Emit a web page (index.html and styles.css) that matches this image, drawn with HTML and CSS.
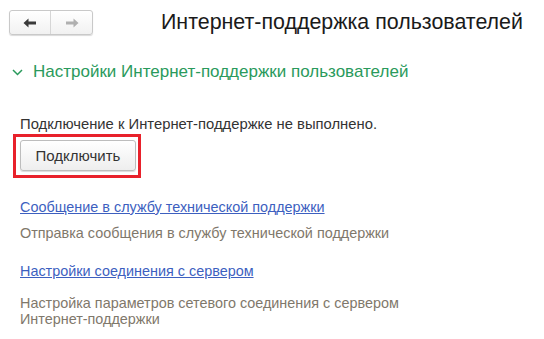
FILE: index.html
```html
<!DOCTYPE html>
<html lang="ru">
<head>
    <meta charset="UTF-8">
    <meta name="viewport" content="width=device-width, initial-scale=1.0">
    <title>Интернет-поддержка пользователей</title>
    <link rel="stylesheet" href="styles.css">
</head>
<body>
    <div class="page">
        <div class="topbar">
            <div class="nav">
                <button class="nav-btn back" title="Назад">
                    <svg width="14" height="10" viewBox="0 0 14 10"><path d="M0.5 5 L5.5 0.5 L5.5 3.5 L13 3.5 L13 6.5 L5.5 6.5 L5.5 9.5 Z" fill="#3a3a3a"/></svg>
                </button>
                <button class="nav-btn forward" title="Вперед">
                    <svg width="14" height="10" viewBox="0 0 14 10"><path d="M13.5 5 L8.5 0.5 L8.5 3.5 L1 3.5 L1 6.5 L8.5 6.5 L8.5 9.5 Z" fill="#b0b0b0"/></svg>
                </button>
            </div>
            <h1 class="title">Интернет-поддержка пользователей</h1>
        </div>

        <div class="group-head">
            <svg class="chevron" width="11" height="7" viewBox="0 0 11 7"><path d="M1 1 L5.5 5.5 L10 1" fill="none" stroke="#2a9a5c" stroke-width="1.5"/></svg>
            <span>Настройки Интернет-поддержки пользователей</span>
        </div>

        <div class="group-body">
            <p class="status">Подключение к Интернет-поддержке не выполнено.</p>
            <div class="highlight">
                <button class="btn">Подключить</button>
            </div>

            <div class="item">
                <a class="link" href="#">Сообщение в службу технической поддержки</a>
                <p class="hint">Отправка сообщения в службу технической поддержки</p>
            </div>

            <div class="item second">
                <a class="link" href="#">Настройки соединения с сервером</a>
                <p class="hint">Настройка параметров сетевого соединения с сервером<br>Интернет-поддержки</p>
            </div>
        </div>
    </div>
</body>
</html>
```

FILE: styles.css
```css
body {
    margin: 0;
    background-color: white;
    font-family: Arial, "Liberation Sans", sans-serif;
    color: #333;
}
.page {
    width: 544px;
    height: 339px;
    overflow: hidden;
}
.topbar {
    display: flex;
    align-items: center;
    padding: 10px 0 0 9px;
}
.nav {
    display: flex;
    height: 25px;
    border: 1px solid #c9c9c9;
    border-radius: 3px;
    box-shadow: 0 1px 1px rgba(0, 0, 0, 0.15);
    background: linear-gradient(#ffffff, #f1f1f1);
    box-sizing: border-box;
}
.nav-btn {
    width: 41px;
    height: 23px;
    border: none;
    background: transparent;
    padding: 0;
    display: flex;
    align-items: center;
    justify-content: center;
}
.nav-btn.back {
    border-right: 1px solid #d6d6d6;
}
.title {
    margin: 0 0 0 68px;
    font-size: 21.4px;
    font-weight: normal;
    color: #1a1a1a;
    line-height: 25px;
}
.group-head {
    display: flex;
    align-items: center;
    margin: 26px 0 0 12px;
    color: #2a9a5c;
    font-size: 17px;
    line-height: 22px;
}
.chevron {
    margin-right: 10px;
}
.group-body {
    padding-left: 20px;
    margin-top: 33px;
}
.status {
    margin: 0;
    font-size: 14.8px;
    line-height: 17px;
}
.highlight {
    display: inline-block;
    margin: 1px 0 0 -7px;
    padding: 3px 2px 4px 4px;
    border: 3px solid #e8212b;
}
.btn {
    display: block;
    width: 116px;
    height: 31px;
    border: 1px solid #bdbdbd;
    border-radius: 3px;
    background: linear-gradient(#ffffff, #eeeeee);
    box-shadow: 0 1px 1px rgba(0, 0, 0, 0.15);
    font-family: Arial, "Liberation Sans", sans-serif;
    font-size: 15px;
    color: #333;
    padding: 0;
}
.item {
    margin-top: 20px;
}
.item.second {
    margin-top: 21px;
}
.link {
    font-size: 14.4px;
    color: #3d5fbf;
    text-decoration: underline;
    line-height: 17px;
}
.hint {
    margin: 9px 0 0 0;
    font-size: 14.4px;
    line-height: 16px;
    color: #7f786b;
}
.item.second .hint {
    margin-top: 15px;
}
```
